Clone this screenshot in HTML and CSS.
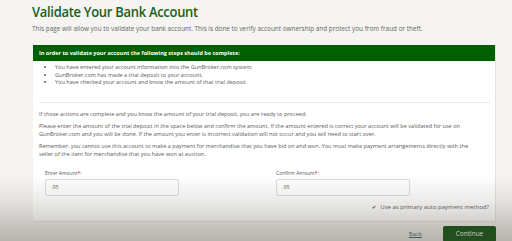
FILE: index.html
```html
<!DOCTYPE html>
<html>
<head>
<meta charset="utf-8">
<link rel="stylesheet" href="styles.css">
</head>
<body>
<div class="page">
  <h1 class="title">Validate Your Bank Account</h1>
  <p class="intro">This page will allow you to validate your bank account. This is done to verify account ownership and protect you from fraud or theft.</p>
  <div class="panel">
    <div class="panel-head">In order to validate your account the following steps should be complete:</div>
    <div class="panel-body">
      <ul class="steps">
        <li>You have entered your account information into the GunBroker.com system.</li>
        <li>GunBroker.com has made a trial deposit to your account.</li>
        <li>You have checked your account and know the amount of that trial deposit.</li>
      </ul>
      <hr class="sep">
      <p class="para">If those actions are complete and you know the amount of your trial deposit, you are ready to proceed.</p>
      <p class="para">Please enter the amount of the trial deposit in the space below and confirm the amount. If the amount entered is correct your account will be validated for use on GunBroker.com and you will be done. If the amount you enter is incorrect validation will not occur and you will need to start over.</p>
      <p class="para">Remember, you cannot use this account to make a payment for merchandise that you have bid on and won. You must make payment arrangements directly with the seller of the item for merchandise that you have won at auction.</p>
      <div class="fields">
        <div class="field">
          <label class="label">Enter Amount<span class="req">*</span>:</label>
          <div class="input">.95</div>
        </div>
        <div class="field">
          <label class="label">Confirm Amount<span class="req">*</span>:</label>
          <div class="input">.95</div>
        </div>
      </div>
      <div class="check-row">
        <span class="check">&#10004;</span>
        <span class="check-text">Use as primary auto payment method?</span>
      </div>
    </div>
  </div>
  <div class="actions">
    <a class="back">Back</a>
    <span class="btn">Continue</span>
  </div>
</div>
<div class="shade"></div>
</body>
</html>
```
FILE: styles.css
```css
html, body {
  margin: 0;
  padding: 0;
  background: #f5f4f1;
  font-family: "Open Sans", "Liberation Sans", sans-serif;
  color: #5a5a5a;
  overflow: hidden;
  height: 241px;
}
.page {
  margin-left: 32px;
  width: 464px;
  padding-top: 3px;
}
.title {
  margin: 0;
  font-size: 13px;
  font-weight: 600;
  color: #1c5e1c;
  line-height: 18px;
  letter-spacing: -0.3px;
  transform: scaleY(1.08);
  transform-origin: left bottom;
}
.intro {
  margin: 4px 0 0 0;
  font-size: 6.4px;
  line-height: 8px;
  color: #666;
}
.panel {
  margin-top: 12px;
  margin-left: 1px;
  width: 462px;
  background: #fff;
  border-right: 1px solid #e2e2df;
  border-bottom: 1px solid #e2e2df;
}
.panel-head {
  background: #006000;
  color: #fff;
  font-size: 5.5px;
  font-weight: 700;
  height: 16px;
  line-height: 16px;
  padding-left: 6px;
}
.panel-body {
  padding: 3px 5px 10px 6px;
}
.steps {
  margin: 0;
  padding: 0 0 0 16px;
  font-size: 5.55px;
  line-height: 7.5px;
  list-style: disc;
}
.sep {
  border: none;
  border-top: 1px solid #e8e8e8;
  margin: 15px 0 7px 0;
  height: 0;
}
.para {
  margin: 0 0 4px 0;
  padding-right: 12px;
  font-size: 5.6px;
  line-height: 8px;
}
.fields {
  display: grid;
  grid-template-columns: 231px 1fr;
  margin-top: 11px;
}
.field {
  padding-left: 6px;
}
.label {
  display: block;
  font-size: 5px;
  line-height: 8px;
  color: #555;
}
.req { color: #c00; }
.input {
  margin-top: 2px;
  border: 1px solid #dcdcdc;
  border-radius: 2px;
  font-size: 5.5px;
  line-height: 15px;
  padding-left: 5px;
  box-sizing: border-box;
  width: 134px;
  height: 17px;
  color: #666;
}
.check-row {
  display: flex;
  justify-content: flex-end;
  align-items: center;
  gap: 4px;
  margin-top: 7px;
  font-size: 6px;
  line-height: 8px;
  padding-right: 1px;
}
.check {
  color: #1a4d1a;
  font-size: 5px;
}
.actions {
  display: flex;
  justify-content: flex-end;
  align-items: center;
  gap: 21px;
  margin-top: 4px;
  width: 464px;
}
.back {
  color: #3a6a5a;
  text-decoration: underline;
  font-size: 6px;
}
.btn {
  background: #0a500a;
  color: #fff;
  font-size: 6.5px;
  width: 53px;
  height: 16px;
  line-height: 15px;
  text-align: center;
  border-radius: 2px;
}
.shade {
  position: absolute;
  left: 0;
  top: 175px;
  width: 512px;
  height: 66px;
  pointer-events: none;
  background: linear-gradient(to bottom, rgba(90,85,75,0) 0%, rgba(90,85,75,0.12) 40%, rgba(80,75,65,0.38) 100%);
}
```
